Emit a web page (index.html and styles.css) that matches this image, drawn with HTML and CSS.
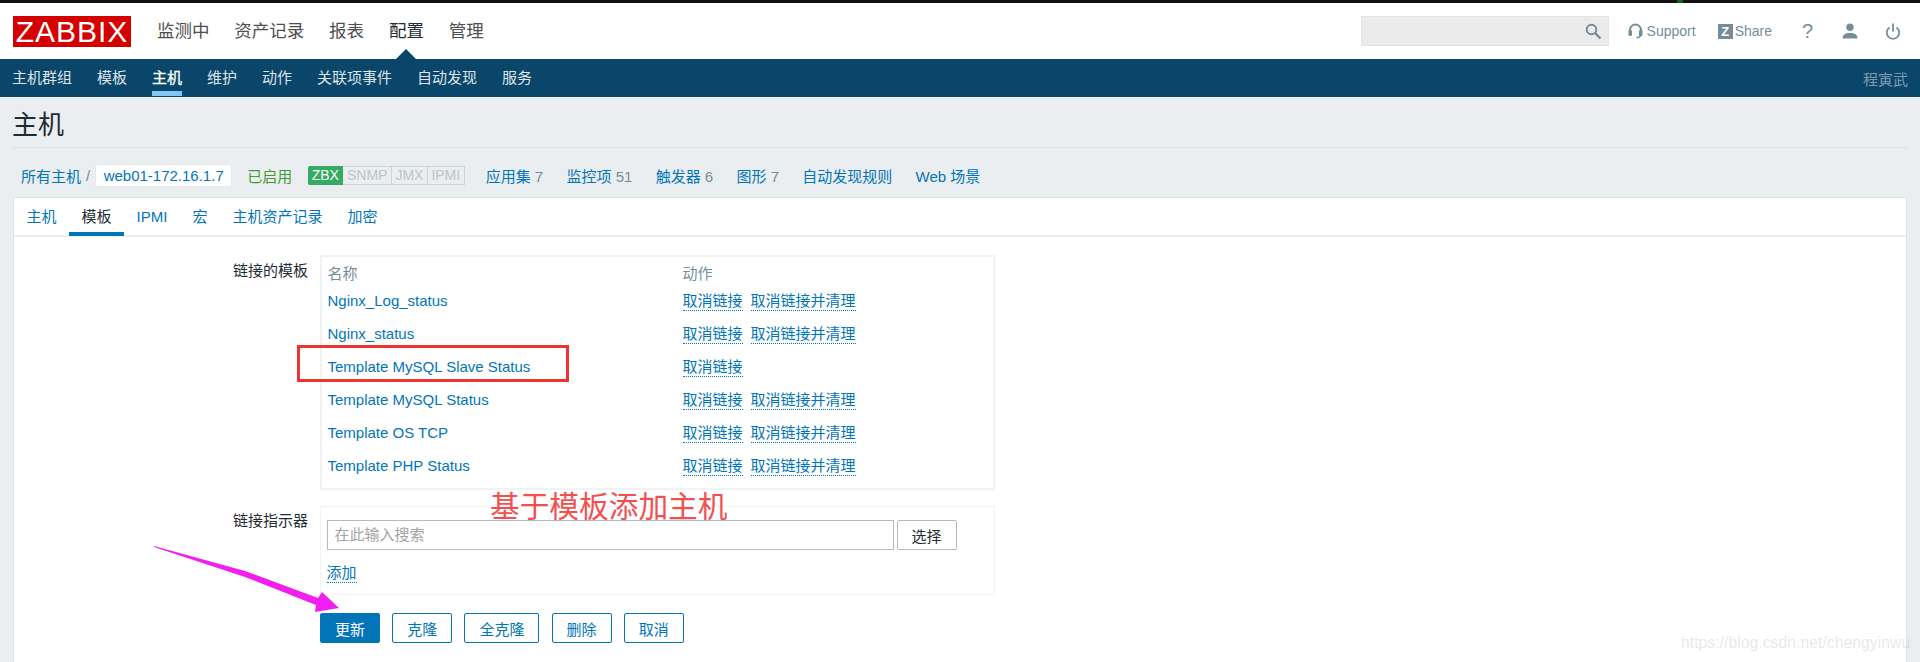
FILE: index.html
```html
<!doctype html>
<html lang="en">
<head>
  <meta charset="UTF-8">
  <title>Zabbix</title>
  <link rel="stylesheet" href="styles.css">
</head>
<body>

  <div class="blackStrip"></div>

  <header class="topBar">
    <div class="logo">ZABBIX</div>
    <nav class="mainMenu">
      <a>监测中</a>
      <a>资产记录</a>
      <a>报表</a>
      <a class="active">配置</a>
      <a>管理</a>
    </nav>
    <div class="topRight">
      <div class="searchBox">
        <svg class="icon" width="17" height="17" viewBox="0 0 17 17"><circle cx="6.5" cy="6.5" r="4.8" fill="none" stroke="#768d99" stroke-width="2"/><path d="M10 10l5.500 5.500" stroke="#768d99" stroke-width="2.400"/></svg>
      </div>
      <a class="topLink supportLink">
        <svg width="15" height="16" viewBox="0 0 15 16"><path d="M2 9V7a5.500 5.500 0 0 1 11 0v2" fill="none" stroke="#768d99" stroke-width="2"/><rect x="0.500" y="7" width="3.500" height="6" rx="1.200" fill="#768d99"/><rect x="11" y="7" width="3.500" height="6" rx="1.200" fill="#768d99"/><path d="M12.500 12c0 2-1.500 2.600-4 2.600" fill="none" stroke="#768d99" stroke-width="1.500"/></svg>
        Support
      </a>
      <a class="topLink shareLink"><span class="shareZ">Z</span>Share</a>
      <a class="helpLink">?</a>
      <svg class="userIcon" width="16" height="16" viewBox="0 0 16 16"><circle cx="8" cy="4.200" r="3.700" fill="#768d99"/><path d="M0.500 15.500c0-4 3-5.500 7.500-5.500s7.500 1.500 7.500 5.500z" fill="#768d99"/></svg>
      <svg class="powerIcon" width="16" height="17" viewBox="0 0 16 17"><path d="M4.500 4.500a6.200 6.200 0 1 0 7 0" fill="none" stroke="#768d99" stroke-width="1.800"/><path d="M8 0.500v8" stroke="#768d99" stroke-width="1.800"/></svg>
    </div>
  </header>

  <nav class="subMenu">
    <a>主机群组</a>
    <a>模板</a>
    <a class="active">主机</a>
    <a>维护</a>
    <a>动作</a>
    <a>关联项事件</a>
    <a>自动发现</a>
    <a>服务</a>
    <span class="userName">程寅武</span>
  </nav>

  <main class="pageBody">
    <h1 class="pageTitle">主机</h1>

    <div class="hostBar">
      <a>所有主机</a>
      <span class="slash">/</span>
      <a class="hostPill">web01-172.16.1.7</a>
      <span class="statusOn">已启用</span>
      <div class="badges">
        <span class="badge badgeOn">ZBX</span>
        <span class="badge">SNMP</span>
        <span class="badge">JMX</span>
        <span class="badge">IPMI</span>
      </div>
      <div class="hostLinks">
        <a>应用集 <em>7</em></a>
        <a>监控项 <em>51</em></a>
        <a>触发器 <em>6</em></a>
        <a>图形 <em>7</em></a>
        <a>自动发现规则</a>
        <a>Web 场景</a>
      </div>
    </div>

    <section class="panel">
      <div class="tabs">
        <a>主机</a>
        <a class="active">模板</a>
        <a>IPMI</a>
        <a>宏</a>
        <a>主机资产记录</a>
        <a>加密</a>
      </div>

      <div class="formArea">
        <div class="formRow">
          <label class="formLabel">链接的模板</label>
          <div class="formBox linkedBox">
            <div class="tmplRow tmplHead"><span class="tmplName">名称</span><span>动作</span></div>
            <div class="tmplRow"><a class="tmplName">Nginx_Log_status</a><span class="actions"><a class="dotted">取消链接</a><a class="dotted">取消链接并清理</a></span></div>
            <div class="tmplRow"><a class="tmplName">Nginx_status</a><span class="actions"><a class="dotted">取消链接</a><a class="dotted">取消链接并清理</a></span></div>
            <div class="tmplRow"><a class="tmplName">Template MySQL Slave Status</a><span class="actions"><a class="dotted">取消链接</a></span></div>
            <div class="tmplRow"><a class="tmplName">Template MySQL Status</a><span class="actions"><a class="dotted">取消链接</a><a class="dotted">取消链接并清理</a></span></div>
            <div class="tmplRow"><a class="tmplName">Template OS TCP</a><span class="actions"><a class="dotted">取消链接</a><a class="dotted">取消链接并清理</a></span></div>
            <div class="tmplRow"><a class="tmplName">Template PHP Status</a><span class="actions"><a class="dotted">取消链接</a><a class="dotted">取消链接并清理</a></span></div>
          </div>
        </div>

        <div class="formRow indicatorRow">
          <label class="formLabel">链接指示器</label>
          <div class="formBox indicatorBox">
            <div class="searchRow">
              <div class="fakeInput">在此输入搜索</div>
              <button class="selectBtn">选择</button>
            </div>
            <a class="dotted addLink">添加</a>
          </div>
        </div>

        <div class="buttons">
          <button class="btn primary">更新</button>
          <button class="btn">克隆</button>
          <button class="btn">全克隆</button>
          <button class="btn">删除</button>
          <button class="btn">取消</button>
        </div>
      </div>
    </section>
  </main>

  <!-- hand drawn marks on top of the screenshot -->
  <div class="redRect"></div>
  <div class="redNote">基于模板添加主机</div>
  <svg class="arrow" width="190" height="70" viewBox="0 0 190 70"><polygon points="0,0 91,25 164,52 168,46 185,62 161,66 162,59 91,31 0,1" fill="#f01ff0"/></svg>
  <div class="watermark">https://blog.csdn.net/chengyinwu</div>

</body>
</html>
```

FILE: styles.css
```css
html, body {
  margin: 0;
  padding: 0;
  height: 100%;
  overflow: hidden;
}

body {
  background-color: #ebeef0;
  font-family: "Liberation Sans", "Noto Sans CJK SC", sans-serif;
  font-size: 15px;
  color: #1f2c33;
  position: relative;
}

a {
  color: #0275b8;
}

em {
  font-style: normal;
  color: #768d99;
}

.blackStrip {
  height: 3px;
  background: linear-gradient(#1c5a1c, #1c5a1c) no-repeat 1677px 0 / 6px 100%, #111;
}

/* top white bar */
.topBar {
  height: 56px;
  background-color: #fff;
  display: flex;
  align-items: flex-start;
  padding-left: 13px;
  position: relative;
}

.logo {
  width: 118px;
  height: 31px;
  margin-top: 13px;
  background-color: #d40000;
  color: #fff;
  font-size: 30px;
  line-height: 32px;
  letter-spacing: 1px;
  text-align: center;
}

.mainMenu {
  display: flex;
  gap: 24.800px;
  margin-left: 26px;
  margin-top: 17px;
  font-size: 17.500px;
  line-height: 22px;
}

.mainMenu a {
  color: #4f4f4f;
  position: relative;
}

.mainMenu a.active {
  color: #1f2c33;
}

/* little triangle pointing at the active section */
.mainMenu a.active::after {
  content: "";
  position: absolute;
  left: 50%;
  margin-left: -10px;
  top: 29px;
  border-left: 10px solid transparent;
  border-right: 10px solid transparent;
  border-bottom: 10px solid #0a466a;
}

.topRight {
  margin-left: auto;
  display: flex;
  align-items: center;
  height: 30px;
  margin-top: 13px;
  padding-right: 19px;
}

.searchBox {
  width: 248px;
  height: 30px;
  box-sizing: border-box;
  background-color: #ebebeb;
  border: 1px solid #e4e4e4;
  display: flex;
  align-items: center;
  justify-content: flex-end;
  padding-right: 6px;
  margin-right: 19px;
}

.topLink {
  color: #768d99;
  font-size: 14px;
  display: flex;
  align-items: center;
}

.supportLink svg {
  margin-right: 4px;
}

.supportLink {
  margin-right: 22px;
}

.shareZ {
  width: 15px;
  height: 15px;
  background-color: #768d99;
  color: #fff;
  font-weight: bold;
  font-size: 13px;
  line-height: 15px;
  text-align: center;
  margin-right: 2px;
}

.helpLink {
  color: #768d99;
  font-size: 20px;
  margin-left: 30px;
  width: 10px;
  text-align: center;
}

.userIcon {
  margin-left: 30px;
}

.powerIcon {
  margin-left: 27px;
}

/* blue sub menu */
.subMenu {
  height: 38px;
  background-color: #0a466a;
  display: flex;
  align-items: center;
  gap: 25px;
  padding: 0 12px;
}

.subMenu a {
  color: #dde5ea;
  line-height: 38px;
  height: 38px;
  box-sizing: border-box;
}

.subMenu a.active {
  color: #fff;
  -webkit-text-stroke: 0.3px #fff;
  background: linear-gradient(#7fc6f2, #7fc6f2) no-repeat 0 32px / 100% 5px;
}

.userName {
  margin-left: auto;
  color: #7f9cad;
}

/* page */
.pageBody {
  padding: 0 13px;
}

.pageTitle {
  margin: 0;
  font-size: 26px;
  font-weight: normal;
  line-height: 56px;
  height: 50px;
  margin-left: -1px;
  border-bottom: 1px solid #dde2e5;
}

.hostBar {
  display: flex;
  align-items: center;
  height: 23px;
  margin-top: 16px;
  padding-left: 8px;
}

.slash {
  color: #768d99;
  margin: 0 5px 0 5px;
}

.hostPill {
  background-color: #fff;
  border: 1px solid #e4e8ea;
  border-radius: 2px;
  box-sizing: border-box;
  height: 23px;
  line-height: 21px;
  width: 137px;
  text-align: center;
}

.statusOn {
  color: #3f9c35;
  margin-left: 15px;
}

.badges {
  display: flex;
  margin-left: 16px;
  height: 19px;
  font-size: 14px;
}

.badge {
  border: 1px solid #cdd5d9;
  border-left: 0;
  color: #bcc5ca;
  padding: 0 3.500px;
  line-height: 17px;
  box-sizing: border-box;
}

.badgeOn {
  background-color: #35aa62;
  border-color: #35aa62;
  color: #fff;
  border-radius: 2px 0 0 2px;
}

.hostLinks {
  display: flex;
  gap: 23.300px;
  margin-left: 21px;
}

.panel {
  margin-top: 10px;
  background-color: #fff;
  border: 1px solid #dfe4e7;
  border-bottom: 0;
  height: 470px;
}

.tabs {
  display: flex;
  height: 37px;
  border-bottom: 2px solid #ebeef0;
}

.tabs a {
  padding: 0 12.500px;
  line-height: 38px;
  height: 34px;
}

.tabs a.active {
  color: #1f2c33;
  border-bottom: 4px solid #0275b8;
}

.formArea {
  padding-top: 18px;
}

.formRow {
  display: flex;
}

.formLabel {
  width: 294px;
  text-align: right;
  padding-top: 7px;
  margin-right: 11.500px;
  line-height: 18px;
}

.formBox {
  width: 675px;
  box-sizing: border-box;
  border: 2px solid #f0f2f3;
  padding: 0 6px;
}

.linkedBox {
  height: 235px;
}

.tmplRow {
  display: flex;
  height: 33px;
  line-height: 33px;
  margin-top: 0;
}

.tmplHead {
  height: 27px;
  line-height: 34px;
  color: #768d99;
}

.tmplName {
  width: 355px;
}

.actions {
  display: flex;
  gap: 8px;
}

.dotted {
  border-bottom: 1px dotted #0275b8;
  line-height: 19px;
  height: 19px;
  margin-top: 7px;
}

.indicatorRow {
  margin-top: 16px;
}

.indicatorRow .formLabel {
  padding-top: 6px;
}

.indicatorBox {
  height: 89px;
  border-width: 1px;
}

.searchRow {
  display: flex;
  gap: 3px;
  margin-top: 13px;
}

.fakeInput {
  width: 567px;
  height: 30px;
  box-sizing: border-box;
  border: 1px solid #acbbc4;
  color: #a3a3a3;
  line-height: 28px;
  padding-left: 7px;
}

.selectBtn {
  width: 60px;
  height: 30px;
  background-color: #fff;
  border: 1px solid #acbbc4;
  border-radius: 2px;
  font: inherit;
  color: #1f2c33;
  padding: 0;
}

.addLink {
  display: inline-block;
  margin-top: 13px;
}

.buttons {
  display: flex;
  gap: 12.200px;
  margin-top: 18px;
  margin-left: 306px;
}

.btn {
  height: 30px;
  padding: 0 14px;
  background-color: #fff;
  border: 1px solid #0275b8;
  border-radius: 2px;
  color: #0275b8;
  font: inherit;
}

.btn.primary {
  background-color: #0275b8;
  color: #fff;
}

/* annotations that lie over the page */
.redRect {
  position: absolute;
  left: 297px;
  top: 345px;
  width: 272px;
  height: 37px;
  box-sizing: border-box;
  border: 3px solid #ee3333;
}

.redNote {
  position: absolute;
  left: 490px;
  top: 489px;
  font-family: "Liberation Serif", "Noto Sans CJK SC", serif;
  font-size: 29.700px;
  line-height: 36px;
  color: #f25050;
}

.arrow {
  position: absolute;
  left: 154px;
  top: 546px;
}

.watermark {
  position: absolute;
  left: 1681px;
  top: 633px;
  font-size: 15.800px;
  line-height: 20px;
  color: rgba(130, 130, 130, 0.2);
  white-space: nowrap;
}
```
